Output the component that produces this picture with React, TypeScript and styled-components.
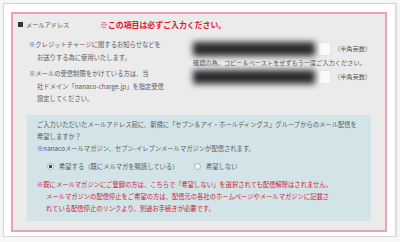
import React from 'react'
import styled, { createGlobalStyle } from 'styled-components'

const GlobalStyle = createGlobalStyle`
    html, body {
        margin: 0;
        padding: 0;
        background: #f7f7f7;
    }
    body {
        font-family: "Noto Sans CJK JP", "Noto Sans", sans-serif;
        color: #5a5a5a;
    }
`

const Frame = styled.div`
    margin: 3px 0 0 3px;
    width: 393px;
    height: 234px;
    box-sizing: border-box;
    background: #fff;
    border: 1px solid #d6d6d6;
    box-shadow: 1px 1px 3px rgba(0, 0, 0, 0.12);
    padding: 8px 8px 5px 7px;
`

const Panel = styled.section`
    height: 220px;
    box-sizing: border-box;
    border: 2px solid #eaa3b4;
    background: #ebebeb;
    padding: 0 14px 9px 14px;
    display: flex;
    flex-direction: column;
`

const Header = styled.div`
    display: flex;
    align-items: center;
    height: 20px;
    margin-left: -9px;
`

const Label = styled.div`
    display: flex;
    align-items: center;
    font-size: 6.2px;
    width: 82px;
    white-space: nowrap;
    color: #555;
`

const Square = styled.span`
    width: 5px;
    height: 5px;
    background: #333;
    margin-right: 3px;
`

const Required = styled.div`
    font-size: 7.9px;
    font-weight: 700;
    color: #e0192f;
    white-space: nowrap;
`

const Body = styled.div`
    display: flex;
    padding-top: 5px;
    height: 76px;
`

const Notes = styled.div`
    width: 163px;
    flex-shrink: 0;
    padding-left: 2px;
`

const Note = styled.p`
    margin: 0 0 4px 0;
    font-size: 6.3px;
    line-height: 12.5px;
    white-space: nowrap;
    padding-left: 8px;
    text-indent: -8px;
`

const Fields = styled.div`
    display: flex;
    flex-direction: column;
    padding-top: 1px;
`

const FieldRow = styled.div`
    display: flex;
    align-items: center;
    height: 17px;
`

const Masked = styled.div`
    width: 122px;
    height: 14px;
    background: #2b2b2b;
    filter: blur(3px);
    margin: 0 3px 0 1px;
`

const Input = styled.div`
    width: 11px;
    height: 12px;
    background: #fafafa;
    border: 1px solid #e4e4e4;
    margin-right: 3px;
`

const Hint = styled.span`
    font-size: 6.2px;
    white-space: nowrap;
`

const Confirm = styled.div`
    font-size: 6.2px;
    line-height: 12px;
    white-space: nowrap;
    margin: 0 0 -1px 1px;
`

const Mailing = styled.div`
    flex: 1;
    background: #d3e4e8;
    padding: 4px 8px 0 10px;
`

const Line = styled.div<{ red?: boolean; indent?: number }>`
    font-size: 6.3px;
    line-height: 12px;
    white-space: nowrap;
    color: ${({ red }) => (red ? '#cc2233' : '#5a5a5a')};
    padding-left: ${({ indent }) => (indent ? indent : 0)}px;
`

const Choices = styled.div`
    display: flex;
    align-items: center;
    height: 17px;
    margin: 3px 0 4px 10px;
`

const Choice = styled.label`
    display: flex;
    align-items: center;
    font-size: 6.3px;
    white-space: nowrap;
    width: 147px;
`

const Radio = styled.span<{ checked?: boolean }>`
    width: 5px;
    height: 5px;
    border-radius: 50%;
    border: 1px solid #a7b0b6;
    background: ${({ checked }) => (checked ? 'radial-gradient(circle, #25527a 0 1.6px, #fff 1.9px)' : '#f5f7f8')};
    margin-right: 5px;
`

const App = () => {
    return (
        <>
            <GlobalStyle />
            <Frame>
                <Panel>
                    <Header>
                        <Label><Square />メールアドレス</Label>
                        <Required>※この項目は必ずご入力ください。</Required>
                    </Header>
                    <Body>
                        <Notes>
                            <Note>※クレジットチャージに関するお知らせなどを<br />お送りする為に使用いたします。</Note>
                            <Note>※メールの受信制限をかけている方は、当<br />社ドメイン「nanaco-charge.jp」を指定受信<br />設定してください。</Note>
                        </Notes>
                        <Fields>
                            <FieldRow>
                                <Masked />
                                <Input />
                                <Hint>（半角英数）</Hint>
                            </FieldRow>
                            <Confirm>確認の為、コピー＆ペーストをせずもう一度ご入力ください。</Confirm>
                            <FieldRow>
                                <Masked />
                                <Input />
                                <Hint>（半角英数）</Hint>
                            </FieldRow>
                        </Fields>
                    </Body>
                    <Mailing>
                        <Line>ご入力いただいたメールアドレス宛に、新規に「セブン＆アイ・ホールディングス」グループからのメール配信を</Line>
                        <Line>希望しますか？</Line>
                        <Line>※nanacoメールマガジン、セブン-イレブンメールマガジンが配信されます。</Line>
                        <Choices>
                            <Choice><Radio checked />希望する（既にメルマガを購読している）</Choice>
                            <Choice><Radio />希望しない</Choice>
                        </Choices>
                        <Line red>※既にメールマガジンにご登録の方は、こちらで「希望しない」を選択されても配信解除はされません。</Line>
                        <Line red indent={9}>メールマガジンの配信停止をご希望の方は、配信元の各社のホームページやメールマガジンに記載さ</Line>
                        <Line red indent={9}>れている配信停止のリンクより、別途お手続きが必要です。</Line>
                    </Mailing>
                </Panel>
            </Frame>
        </>
    )
}

export default App
